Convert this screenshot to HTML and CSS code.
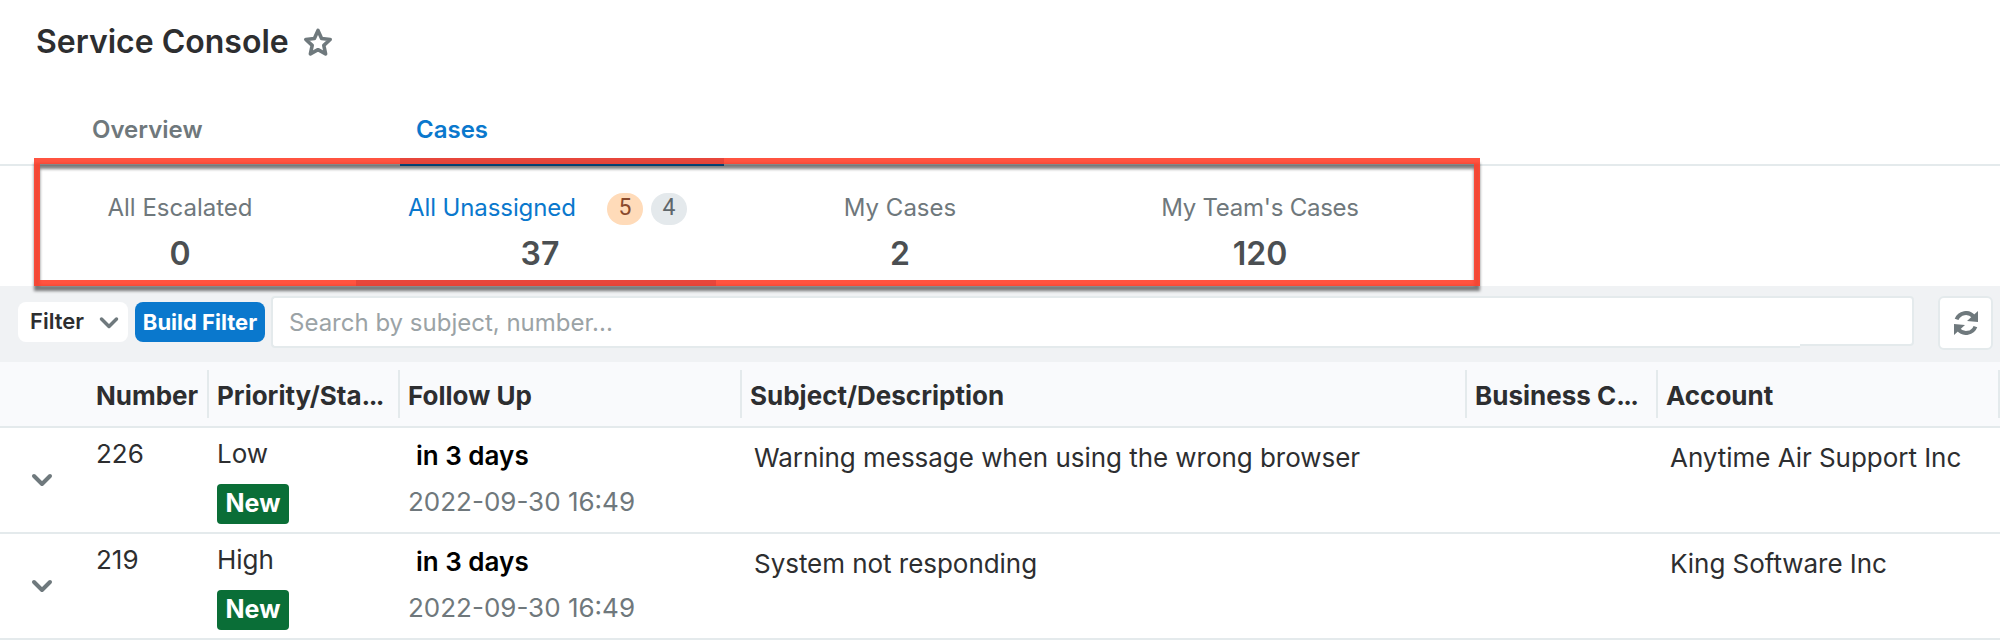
FILE: index.html
```html
<!DOCTYPE html>
<html lang="en">
<head>
    <meta charset="UTF-8">
    <meta name="viewport" content="width=device-width, initial-scale=1.0">
    <title>Service Console</title>
    <link rel="stylesheet" href="styles.css">
</head>
<body>
    <header class="page-header">
        <h1>Service Console</h1>
        <svg class="star" width="32" height="32" viewBox="0 0 32 32">
            <path d="M16 3.4l3.6 8.1 8.6 1-6.4 5.8 1.8 8.6L16 22.7l-7.6 4.2 1.8-8.6-6.4-5.8 8.6-1z"/>
        </svg>
    </header>

    <nav class="tabs">
        <a class="tab">Overview</a>
        <a class="tab active">Cases</a>
    </nav>

    <section class="metrics">
        <div class="metric">
            <div class="metric-label">All Escalated</div>
            <div class="metric-value">0</div>
        </div>
        <div class="metric active">
            <div class="metric-label">
                <span class="metric-name">All Unassigned</span>
                <span class="count warn">5</span>
                <span class="count">4</span>
            </div>
            <div class="metric-value">37</div>
        </div>
        <div class="metric">
            <div class="metric-label">My Cases</div>
            <div class="metric-value">2</div>
        </div>
        <div class="metric">
            <div class="metric-label team">My Team's Cases</div>
            <div class="metric-value">120</div>
        </div>
        <div class="highlight"></div>
    </section>

    <div class="toolbar">
        <button class="filter-btn">
            <span>Filter</span>
            <svg width="20" height="14" viewBox="0 0 20 14"><path d="M2.5 3l7.5 7.5L17.5 3"/></svg>
        </button>
        <button class="build-btn">Build Filter</button>
        <div class="search">Search by subject, number...</div>
        <div class="search-end"></div>
        <button class="refresh-btn">
            <svg width="24" height="24" viewBox="0 0 24 24">
                <path class="arc" d="M2.6 8.4A10 10 0 0 1 19.5 5.5M21.4 15.6A10 10 0 0 1 4.5 18.5"/>
                <path class="head" d="M24 0v11l-11-1zM0 24V13l11 1z"/>
            </svg>
        </button>
    </div>

    <div class="table">
        <div class="row head-row">
            <div class="th"></div>
            <div class="th number">Number</div>
            <div class="th">Priority/Sta<span class="dots">...</span></div>
            <div class="th">Follow Up</div>
            <div class="th">Subject/Description</div>
            <div class="th">Business C<span class="dots">...</span></div>
            <div class="th">Account</div>
        </div>
        <div class="row">
            <div class="td expand"><svg width="22" height="14" viewBox="0 0 22 14"><path d="M3 3l8 8 8-8"/></svg></div>
            <div class="td number">226</div>
            <div class="td">
                <div>Low</div>
                <span class="badge">New</span>
            </div>
            <div class="td follow">
                <div class="due">in 3 days</div>
                <div class="date">2022-09-30 16:49</div>
            </div>
            <div class="td text">Warning message when using the wrong browser</div>
            <div class="td"></div>
            <div class="td text">Anytime Air Support Inc</div>
        </div>
        <div class="row">
            <div class="td expand"><svg width="22" height="14" viewBox="0 0 22 14"><path d="M3 3l8 8 8-8"/></svg></div>
            <div class="td number">219</div>
            <div class="td">
                <div>High</div>
                <span class="badge">New</span>
            </div>
            <div class="td follow">
                <div class="due">in 3 days</div>
                <div class="date">2022-09-30 16:49</div>
            </div>
            <div class="td text">System not responding</div>
            <div class="td"></div>
            <div class="td text">King Software Inc</div>
        </div>
    </div>
</body>
</html>
```
FILE: styles.css
```css
* {
    box-sizing: border-box;
}
body {
    margin: 0;
    background: #fff;
    color: #2d2e30;
    font-family: Inter, "Liberation Sans", sans-serif;
    font-size: 26px;
    line-height: 32px;
    white-space: nowrap;
    overflow: hidden;
}
button {
    font-family: inherit;
    border: none;
    padding: 0;
}
svg {
    display: block;
    fill: none;
    stroke: #6f797d;
    stroke-width: 4;
    stroke-linecap: round;
    stroke-linejoin: round;
}

/* title */
.page-header {
    display: flex;
    height: 102px;
    padding: 22px 0 0 36px;
}
h1 {
    margin: 0;
    font-size: 32px;
    line-height: 40px;
    font-weight: 600;
}
.star {
    margin: 5px 0 0 13px;
    stroke-width: 3.6;
}

/* tabs */
.tabs {
    display: flex;
    height: 64px;
    padding-left: 76px;
    border-bottom: 2px solid #e4eaec;
}
.tab {
    width: 324px;
    height: 64px;
    padding: 13px 16px 0;
    font-size: 24px;
    line-height: 30px;
    font-weight: 600;
    color: #6f787c;
}
.tab.active {
    color: #0a78cd;
    border-bottom: 8px solid #0a78cd;
}

/* case counters */
.metrics {
    position: relative;
    display: flex;
    height: 120px;
}
.metric {
    width: 360px;
    padding-top: 27px;
    text-align: center;
}
.metric.active {
    margin: 0 4px 0 -4px;
    padding-left: 4px;
    border-bottom: 6px solid #0a78cd;
}
.metric-label {
    display: flex;
    justify-content: center;
    height: 30px;
    font-size: 24px;
    line-height: 30px;
    color: #6f787c;
}
.metric-label.team {
    letter-spacing: -0.25px;
}
.metric.active .metric-label {
    justify-content: flex-start;
    padding-left: 48px;
    color: #0a78cd;
}
.metric-name {
    width: 199px;
    text-align: left;
    letter-spacing: -0.1px;
}
.count {
    width: 36px;
    height: 32px;
    margin-right: 8px;
    border-radius: 16px;
    background: #e4e9ec;
    color: #5f676b;
    font-family: Roboto, sans-serif;
    font-size: 23px;
    line-height: 30px;
}
.count.warn {
    background: #ffdbb9;
    color: #8a4a2c;
}
.metric-value {
    margin-top: 11px;
    font-size: 32px;
    line-height: 40px;
    font-weight: 600;
    color: #4b4f52;
}
.metric.active .metric-value {
    margin-left: 4px;
}
.highlight {
    position: absolute;
    left: 34px;
    top: -8px;
    width: 1446px;
    height: 128px;
    border: 6px solid rgba(255, 64, 43, 0.9);
    filter: drop-shadow(0 5px 1.5px rgba(0, 0, 0, 0.55));
}

/* toolbar */
.toolbar {
    display: flex;
    height: 76px;
    padding: 10px 7px 0 18px;
    background: #f0f2f4;
}
.filter-btn {
    display: flex;
    justify-content: space-between;
    width: 110px;
    height: 40px;
    margin-top: 6px;
    padding: 0 9px 0 12px;
    border-radius: 8px;
    background: #fff;
    color: #2d2e30;
    font-size: 22px;
    line-height: 38px;
    font-weight: 600;
}
.filter-btn svg {
    margin-top: 14px;
    stroke-width: 3.5;
}
.build-btn {
    width: 130px;
    height: 40px;
    margin: 6px 6px 0 7px;
    border-radius: 8px;
    background: #0a78cd;
    color: #fff;
    font-size: 22px;
    line-height: 40px;
    font-weight: 700;
}
.search {
    width: 1529px;
    height: 52px;
    padding-left: 16px;
    border: 2px solid #e4eaec;
    border-right: none;
    border-radius: 4px 0 0 4px;
    background: #fff;
    color: #9ba3a6;
    font-size: 24px;
    line-height: 49px;
}
.search-end {
    width: 114px;
    height: 50px;
    border: 2px solid #e4eaec;
    border-left: none;
    border-radius: 0 4px 4px 0;
    background: #fff;
}
.refresh-btn {
    display: flex;
    align-items: center;
    justify-content: center;
    width: 55px;
    height: 54px;
    margin-left: 24px;
    border: 2px solid #e4eaec;
    border-radius: 6px;
    background: #fff;
}
.refresh-btn .arc {
    stroke-linecap: butt;
}
.refresh-btn .head {
    fill: #6f797d;
    stroke: none;
}

/* cases table */
.row {
    display: grid;
    grid-template-columns: 84px 125px 191px 342px 725px 191px 342px;
    height: 106px;
    border-bottom: 2px solid #e4eaec;
}
.head-row {
    height: 66px;
    padding-top: 8px;
    background: #f9fafc;
}
.th {
    height: 48px;
    padding: 10px 0 0 8px;
    border-right: 2px solid #e4eaec;
    font-weight: 700;
}
.th:first-child {
    border-right: none;
}
.dots {
    letter-spacing: -1.6px;
}
.td {
    padding: 10px 0 0 8px;
}
.th.number,
.td.number {
    padding-left: 12px;
}
.td.expand {
    padding: 45px 0 0 31px;
}
.badge {
    display: block;
    width: 72px;
    height: 40px;
    margin-top: 14px;
    border-radius: 4px;
    background: #0a6e37;
    color: #fff;
    font-weight: 700;
    font-size: 25px;
    line-height: 39px;
    text-align: center;
}
.td.follow {
    padding-top: 12px;
}
.due {
    padding-left: 8px;
    color: #000;
    font-weight: 600;
}
.date {
    margin-top: 14px;
    color: #6f787c;
}
.td.text {
    padding: 14px 0 0 12px;
    letter-spacing: -0.04px;
}
```
